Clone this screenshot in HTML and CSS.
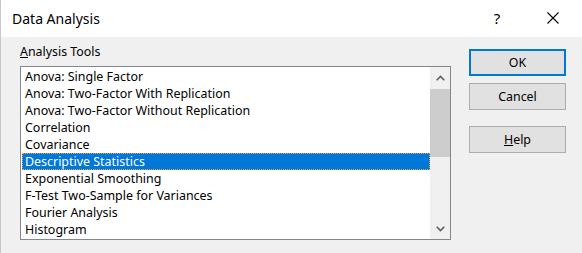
FILE: index.html
```html
<!DOCTYPE html>
<html>
<head>
<meta charset="utf-8">
<link rel="stylesheet" href="styles.css">
</head>
<body>
<div class="window">
  <div class="titlebar">
    <div class="title">Data Analysis</div>
    <div class="tb-help">?</div>
    <div class="tb-close">
      <svg width="12" height="12" viewBox="0 0 12 12"><path d="M0.5 0.5 L11.5 11.5 M11.5 0.5 L0.5 11.5" stroke="#000" stroke-width="1.1" fill="none"/></svg>
    </div>
  </div>
  <div class="content">
    <div class="left">
      <div class="label"><u>A</u>nalysis Tools</div>
      <div class="listbox">
        <div class="items">
          <div class="item">Anova: Single Factor</div>
          <div class="item">Anova: Two-Factor With Replication</div>
          <div class="item">Anova: Two-Factor Without Replication</div>
          <div class="item">Correlation</div>
          <div class="item">Covariance</div>
          <div class="item selected">Descriptive Statistics</div>
          <div class="item">Exponential Smoothing</div>
          <div class="item">F-Test Two-Sample for Variances</div>
          <div class="item">Fourier Analysis</div>
          <div class="item">Histogram</div>
        </div>
        <div class="scrollbar">
          <div class="arrow">
            <svg width="9" height="6" viewBox="0 0 9 6"><path d="M0.7 5.3 L4.5 1.5 L8.3 5.3" stroke="#606060" stroke-width="1.6" fill="none"/></svg>
          </div>
          <div class="track">
            <div class="thumb"></div>
          </div>
          <div class="arrow">
            <svg width="9" height="6" viewBox="0 0 9 6"><path d="M0.7 0.7 L4.5 4.5 L8.3 0.7" stroke="#606060" stroke-width="1.6" fill="none"/></svg>
          </div>
        </div>
      </div>
    </div>
    <div class="buttons">
      <div class="btn default">OK</div>
      <div class="btn">Cancel</div>
      <div class="btn help"><u>H</u>elp</div>
    </div>
  </div>
</div>
</body>
</html>
```
FILE: styles.css
```css
html, body {
  margin: 0;
  padding: 0;
}
body {
  width: 582px;
  height: 253px;
  overflow: hidden;
  background: #ffffff;
  font-family: "Noto Sans", "Open Sans", sans-serif;
  color: #000;
}
.window {
  width: 581px;
  height: 253px;
  border-left: 1px solid #c8c8c8;
  display: flex;
  flex-direction: column;
}
.titlebar {
  height: 37px;
  background: #ffffff;
  display: flex;
  align-items: center;
  flex: none;
}
.title {
  padding-left: 11px;
  font-size: 14px;
  flex: 1;
  line-height: 20px;
  margin-top: 0;
}
.tb-help {
  width: 46px;
  text-align: center;
  font-size: 15px;
  margin-top: -2px;
}
.tb-close {
  width: 46px;
  display: flex;
  justify-content: center;
  margin-left: 10px;
  margin-right: 6px;
  margin-top: -1px;
}
.content {
  flex: 1;
  background: #f0f0f0;
  display: flex;
  padding-left: 19px;
}
.left {
  display: flex;
  flex-direction: column;
}
.label {
  font-size: 12.4px;
  line-height: 16px;
  margin-top: 7px;
  margin-bottom: 6px;
}
.listbox {
  width: 429px;
  height: 172px;
  border: 1px solid #828790;
  background: #ffffff;
  display: flex;
}
.items {
  width: 408px;
  padding: 1px 0 0 1px;
}
.item {
  height: 17px;
  line-height: 18px;
  font-size: 12.45px;
  padding-left: 3px;
  white-space: nowrap;
}
.item.selected {
  background: #0078d7;
  color: #ffffff;
  outline: 1px dotted #f0a040;
  outline-offset: -1px;
}
.scrollbar {
  width: 20px;
  background: #f0f0f0;
  display: flex;
  flex-direction: column;
}
.arrow {
  height: 21px;
  display: flex;
  align-items: center;
  justify-content: center;
}
.track {
  flex: 1;
  padding-top: 1px;
}
.thumb {
  height: 68px;
  background: #cdcdcd;
}
.buttons {
  margin-left: 18px;
  padding-top: 12px;
  display: flex;
  flex-direction: column;
}
.btn {
  width: 95px;
  height: 25px;
  border: 1px solid #adadad;
  background: #e1e1e1;
  font-size: 12.4px;
  display: flex;
  align-items: center;
  justify-content: center;
  margin-bottom: 7px;
}
.btn.default {
  width: 93px;
  height: 23px;
  border: 2px solid #0078d7;
}
.btn.help {
  margin-top: 9px;
}
```
